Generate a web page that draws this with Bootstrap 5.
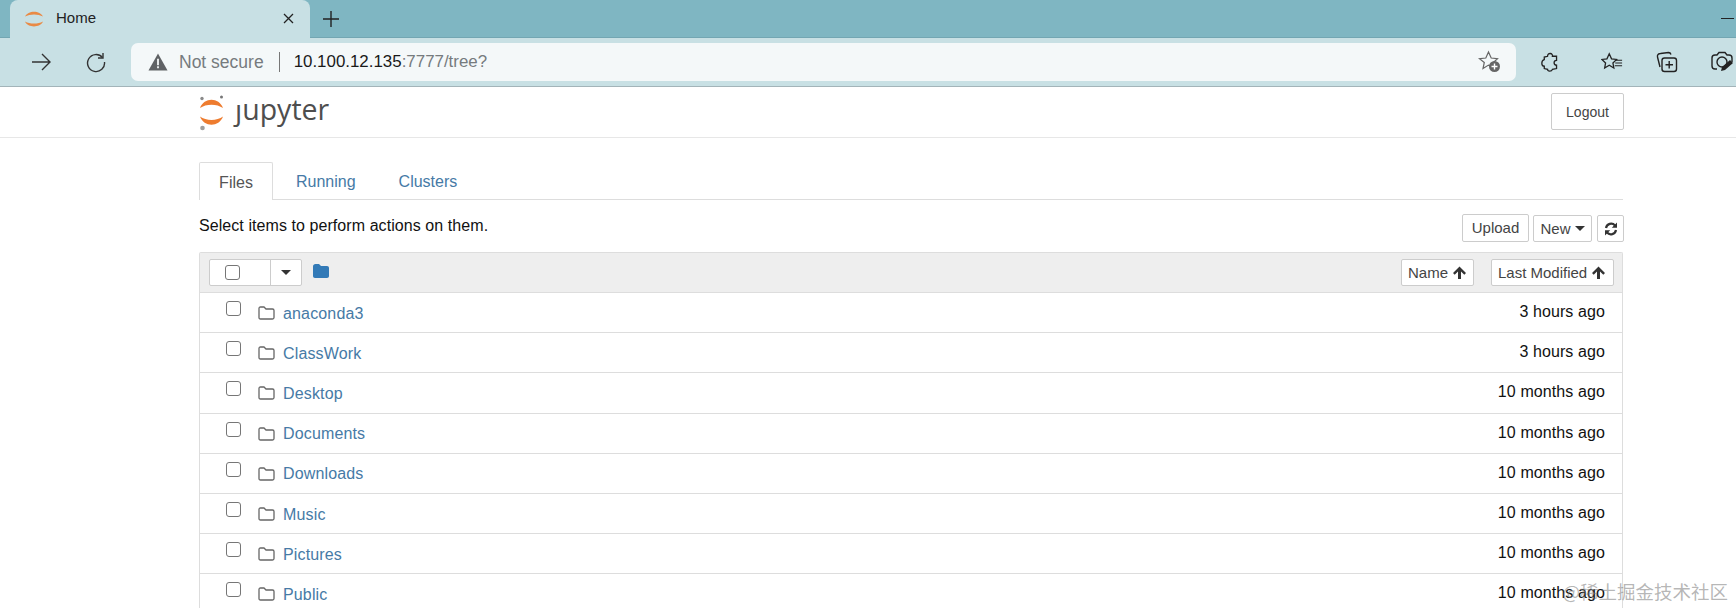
<!DOCTYPE html>
<html lang="en">
<head>
<meta charset="utf-8">
<title>Home</title>
<link href="https://cdn.jsdelivr.net/npm/bootstrap@5.3.0/dist/css/bootstrap.min.css" rel="stylesheet">
<style>
html,body{height:608px;overflow:hidden;background:#fff}
body{font-family:"Liberation Sans",Arial,sans-serif;font-size:16px;color:#111;position:relative}
.tabstrip{height:38px;background:#7fb6c2;padding-left:10px;padding-right:2px;border-bottom:1px solid #73a6b2}
.browser-tab{width:300px;height:38px;background:#c8e0e4;border-radius:8px 8px 0 0;padding:0 15px 0 14px;font-size:15px;color:#222}
.favi{margin-right:12px}
.newtab{margin-left:11px}
.minbtn{margin-left:auto;width:13px;height:1px;background:#222}
.toolbar{height:49px;background:#c8e0e4;border-bottom:1px solid #a3b4b9;padding-top:5px;padding-bottom:5px}
.navicons{width:131px;padding-left:30px;gap:33px}
.addressbar{width:1385px;height:38px;background:#f4f8f9;border-radius:7px;padding:0 14px 0 17px;font-size:17.5px;color:#767b7e}
.notsec{margin-left:11px}
.sep{width:1px;height:20px;background:#777;margin:0 14px 0 15px}
.urltext{font-size:16.9px}
.host{color:#1a1a1a}
.exticons{margin-left:25px}
.ext1{margin-right:42px}
.ext2{margin-right:33px}
.ext3{margin-right:33px}
.jhead{height:51px;border-bottom:1px solid #e7e7e7;padding-left:199px;padding-right:112px}
.jlogo{padding-top:8px;gap:10px}
.jword{font-family:"Open Sans",sans-serif;font-size:28.5px;line-height:30px;color:#4e4e4e;position:relative;margin-top:-1px}
.jword::before{content:"";position:absolute;left:0;top:3px;width:9px;height:8px;background:#fff}
.jbtn{background:#fff;border:1px solid #ccc;color:#444;font-size:14px;line-height:20px;padding:0 7px;border-radius:2px}
.logout{width:73px;height:37px;margin-top:6px;padding:0}
.mainwrap{width:1424px;margin-left:199px;padding-top:24px}
.jtabs{height:38px;border-bottom:1px solid #ddd;font-size:16px}
.jtab{line-height:39px;color:#467aa6;height:37px}
.jtab.on{color:#555;border:1px solid #ddd;border-bottom:0;background:#fff;border-radius:2px 2px 0 0;height:38px;width:74px;padding:0;text-align:center}
.jtab.run{margin-left:23px}
.jtab.clu{margin-left:43px}
.toolrow{height:52px;padding-top:14px}
.seltext{font-size:16px;line-height:24px;color:#111;letter-spacing:.07px}
.upl{width:67px;height:28px;font-size:15px;padding:0}
.newb{width:59px;height:27px;margin-left:4px;font-size:15px;margin-top:1px;padding:0;gap:4px;white-space:nowrap}
.rfr{width:27px;height:27px;margin-left:5px;margin-top:1px;padding:0;margin-right:-1px}
.caretd{display:inline-block;border-top:5px solid #333;border-left:5px solid transparent;border-right:5px solid transparent;vertical-align:middle}
.listbox{border:1px solid #ddd;border-bottom:0;border-radius:2px 2px 0 0}
.listhead{height:40px;background:#eee;border-bottom:1px solid #ddd;padding:6px 8px 6px 9px}
.selgroup{width:93px;height:27px;background:#fff;border:1px solid #ccc;border-radius:2px}
.selleft{width:61px;padding-left:15px;border-right:1px solid #ccc;height:100%}
.selright{width:30px;height:100%;justify-content:center}
.cbx{width:15px;height:15px;border:1.5px solid #767676;border-radius:3px;background:#fff;display:block;flex:none}
.headfolder{margin-left:11px;margin-top:-3px}
.sortb{height:27px;font-size:15px;padding:0 6px;gap:5px;white-space:nowrap}
.sortname{width:73px;margin-right:17px}
.sortmod{width:123px}
.frow{height:40.2px;border-bottom:1px solid #ddd;padding:0 17px 0 26px;font-size:16px}
.frow .cbx{margin-top:-8px}
.ficon{margin-left:17px;margin-right:8px;margin-top:1px}
.flink{color:#467aa6;text-decoration:none;margin-top:2px;letter-spacing:.15px}
.ftime{margin-left:auto;color:#111;margin-top:-1px;letter-spacing:.1px}
.wmark{position:absolute;right:8px;bottom:5px;font-family:"Noto Sans CJK SC",sans-serif;font-size:18.5px;line-height:24px;color:rgba(120,120,120,.55)}
</style>
</head>
<body>
<div class="tabstrip d-flex align-items-center">
  <div class="browser-tab d-flex align-items-center">
    <svg width="20" height="20" viewBox="0 0 20 20" class="favi"><path d="M1 7.500C4 1 16 1 19 7.500 14 4.800 6 4.800 1 7.500Z" fill="#e98a45"/><path d="M1 12.500C4 19 16 19 19 12.500 14 15.200 6 15.200 1 12.500Z" fill="#e98a45"/></svg>
    <span>Home</span>
    <svg width="13" height="13" viewBox="0 0 13 13" class="ms-auto"><path d="M2 2l9 9M11 2l-9 9" stroke="#222" stroke-width="1.3" fill="none"/></svg>
  </div>
  <svg width="20" height="20" viewBox="0 0 20 20" class="newtab"><path d="M10 2v16M2 10h16" stroke="#222" stroke-width="1.4" fill="none"/></svg>
  <div class="minbtn"></div>
</div>
<div class="toolbar d-flex align-items-center">
  <div class="navicons d-flex align-items-center">
    <svg width="22" height="20" viewBox="0 0 22 20"><path d="M2 10h18M12 2l8 8-8 8" stroke="#333" stroke-width="1.4" fill="none"/></svg>
    <svg width="22" height="22" viewBox="0 0 22 22"><path d="M17.500 6.500A8.500 8.500 0 1 0 19.500 11" stroke="#333" stroke-width="1.4" fill="none"/><path d="M18 2v5h-5" stroke="#333" stroke-width="1.4" fill="none"/></svg>
  </div>
  <div class="addressbar d-flex align-items-center">
    <svg width="20" height="18" viewBox="0 0 18 17"><path d="M9 .5L18 16.500H0Z" fill="#5f6265"/><path d="M9 5.500v6M9 12.500v2" stroke="#f4f8f9" stroke-width="1.7"/></svg>
    <span class="notsec">Not secure</span>
    <span class="sep"></span>
    <span class="urltext"><span class="host">10.100.12.135</span>:7777/tree?</span>
    <svg width="24" height="24" viewBox="0 0 24 24" class="ms-auto"><path d="M10.500 2l2.700 6 6.300.7-4.700 4.300 1.300 5-5.600-2.900-5.500 3.400 1.300-6.100L1.500 8.700l6.300-.7Z" fill="none" stroke="#666" stroke-width="1.2"/><circle cx="16.500" cy="16.500" r="5.500" fill="#666"/><path d="M16.500 13.500v6M13.500 16.500h6" stroke="#fff" stroke-width="1.4"/></svg>
  </div>
  <div class="exticons d-flex align-items-center">
    <svg class="ext1" width="18" height="22" viewBox="0 0 22 24"><path d="M8 5c0-5 7-4 6 0h5v5c-4 0-4 6 0 6v4l-5 1c-1 3-6 3-6 0l-4-1v-3c-4 0-4-7 0-8V6Z" fill="none" stroke="#222" stroke-width="1.6"/></svg>
    <svg class="ext2" width="22" height="21" viewBox="0 0 24 22"><path d="M9 1.500l2.500 5.500 5.500.7-4 3.800 1 5.500L9 14l-5 3 1-5.500-4-3.800 5.500-.7Z" fill="none" stroke="#222" stroke-width="1.4"/><path d="M16 8.500h7M15.500 11.500h7.500M15 14.500h8" stroke="#222" stroke-width="1.1"/></svg>
    <svg class="ext3" width="22" height="22" viewBox="0 0 22 22"><path d="M4 16L1.500 6c-.5-2 1-3.500 3-3.500l8-1c1 0 2 .5 2.500 2" fill="none" stroke="#222" stroke-width="1.4"/><rect x="6" y="7" width="14.500" height="13.500" rx="2.500" fill="none" stroke="#222" stroke-width="1.4"/><path d="M13.200 10v7.500M9.500 13.700h7.500" stroke="#222" stroke-width="1.4"/></svg>
    <svg width="22" height="24" viewBox="0 0 22 24"><path d="M6 19H4c-2 0-3-1-3-3V8c0-2 1-3 3-3h2l2-2.500h6L16 5h2c2 0 3 1 3 3v4" fill="none" stroke="#222" stroke-width="1.4"/><circle cx="11" cy="12" r="5" fill="none" stroke="#222" stroke-width="1.4"/><path d="M10 21l1-4 8-7 3 3-8 7Z" fill="#222"/></svg>
  </div>
</div>
<header class="jhead d-flex justify-content-between align-items-start">
  <div class="jlogo d-flex align-items-start">
    <svg width="26" height="36" viewBox="0 0 26 36"><circle cx="3" cy="3.500" r="1.700" fill="#8a8a8a"/><circle cx="22.500" cy="2" r="1.500" fill="#767677"/><circle cx="3.500" cy="33" r="2.300" fill="#9e9e9e"/><path d="M1 13C5 2 20 2 24 13 18 8.500 7 8.500 1 13Z" fill="#ee7c2f"/><path d="M1 21.500C5 32.500 20 32.500 24 21.500 18 26 7 26 1 21.500Z" fill="#ee7c2f"/></svg>
    <span class="jword">jupyter</span>
  </div>
  <button type="button" class="jbtn logout">Logout</button>
</header>
<main class="mainwrap">
  <nav class="jtabs d-flex align-items-start">
    <span class="jtab on">Files</span>
    <span class="jtab run">Running</span>
    <span class="jtab clu">Clusters</span>
  </nav>
  <div class="toolrow d-flex align-items-start">
    <span class="seltext">Select items to perform actions on them.</span>
    <button type="button" class="jbtn upl ms-auto">Upload</button>
    <button type="button" class="jbtn newb d-flex align-items-center justify-content-center">New <span class="caretd"></span></button>
    <button type="button" class="jbtn rfr d-flex align-items-center justify-content-center">
      <svg width="14" height="14" viewBox="0 0 14 14"><path d="M2 6a5.200 5.200 0 0 1 9-2.600M12 8a5.200 5.200 0 0 1-9 2.600" stroke="#333" stroke-width="2.2" fill="none"/><path d="M13 .5v5.200H7.800ZM1 13.500V8.300h5.200Z" fill="#333"/></svg>
    </button>
  </div>
  <section class="listbox">
    <div class="listhead d-flex align-items-center">
      <div class="selgroup d-flex align-items-center">
        <div class="selleft d-flex align-items-center"><span class="cbx"></span></div>
        <div class="selright d-flex align-items-center"><span class="caretd"></span></div>
      </div>
      <svg width="16" height="14" viewBox="0 0 16 14" class="headfolder"><path d="M0 2.500C0 1 1 0 2.500 0H6l2 2h6c1.200 0 2 .8 2 2v8c0 1.200-.8 2-2 2H2c-1.200 0-2-.8-2-2Z" fill="#337ab7"/></svg>
      <button type="button" class="jbtn sortb sortname d-flex align-items-center ms-auto">Name
        <svg width="13" height="13" viewBox="0 0 13 13"><path d="M6.500.5L13 7l-1.700 1.700-3.300-3.300V13H5V5.400L1.700 8.700 0 7Z" fill="#333"/></svg></button>
      <button type="button" class="jbtn sortb sortmod d-flex align-items-center">Last Modified
        <svg width="13" height="13" viewBox="0 0 13 13"><path d="M6.500.5L13 7l-1.700 1.700-3.300-3.300V13H5V5.400L1.700 8.700 0 7Z" fill="#333"/></svg></button>
    </div>
    <div class="frow d-flex align-items-center"><span class="cbx"></span><svg class="ficon" width="17" height="14" viewBox="0 0 17 14"><path d="M1 2.500C1 1.500 1.500 1 2.500 1H6l2 2h6.500c1 0 1.500.5 1.500 1.500v7c0 1-.5 1.500-1.500 1.500h-12C1.500 13 1 12.500 1 11.500Z" fill="none" stroke="#666" stroke-width="1.3"/></svg><a class="flink" href="#">anaconda3</a><span class="ftime">3 hours ago</span></div>
    <div class="frow d-flex align-items-center"><span class="cbx"></span><svg class="ficon" width="17" height="14" viewBox="0 0 17 14"><path d="M1 2.500C1 1.500 1.500 1 2.500 1H6l2 2h6.500c1 0 1.500.5 1.500 1.500v7c0 1-.5 1.500-1.500 1.500h-12C1.500 13 1 12.500 1 11.500Z" fill="none" stroke="#666" stroke-width="1.3"/></svg><a class="flink" href="#">ClassWork</a><span class="ftime">3 hours ago</span></div>
    <div class="frow d-flex align-items-center"><span class="cbx"></span><svg class="ficon" width="17" height="14" viewBox="0 0 17 14"><path d="M1 2.500C1 1.500 1.500 1 2.500 1H6l2 2h6.500c1 0 1.500.5 1.500 1.500v7c0 1-.5 1.500-1.500 1.500h-12C1.500 13 1 12.500 1 11.500Z" fill="none" stroke="#666" stroke-width="1.3"/></svg><a class="flink" href="#">Desktop</a><span class="ftime">10 months ago</span></div>
    <div class="frow d-flex align-items-center"><span class="cbx"></span><svg class="ficon" width="17" height="14" viewBox="0 0 17 14"><path d="M1 2.500C1 1.500 1.500 1 2.500 1H6l2 2h6.500c1 0 1.500.5 1.500 1.500v7c0 1-.5 1.500-1.500 1.500h-12C1.500 13 1 12.500 1 11.500Z" fill="none" stroke="#666" stroke-width="1.3"/></svg><a class="flink" href="#">Documents</a><span class="ftime">10 months ago</span></div>
    <div class="frow d-flex align-items-center"><span class="cbx"></span><svg class="ficon" width="17" height="14" viewBox="0 0 17 14"><path d="M1 2.500C1 1.500 1.500 1 2.500 1H6l2 2h6.500c1 0 1.500.5 1.500 1.500v7c0 1-.5 1.500-1.500 1.500h-12C1.500 13 1 12.500 1 11.500Z" fill="none" stroke="#666" stroke-width="1.3"/></svg><a class="flink" href="#">Downloads</a><span class="ftime">10 months ago</span></div>
    <div class="frow d-flex align-items-center"><span class="cbx"></span><svg class="ficon" width="17" height="14" viewBox="0 0 17 14"><path d="M1 2.500C1 1.500 1.500 1 2.500 1H6l2 2h6.500c1 0 1.500.5 1.500 1.500v7c0 1-.5 1.500-1.500 1.500h-12C1.500 13 1 12.500 1 11.500Z" fill="none" stroke="#666" stroke-width="1.3"/></svg><a class="flink" href="#">Music</a><span class="ftime">10 months ago</span></div>
    <div class="frow d-flex align-items-center"><span class="cbx"></span><svg class="ficon" width="17" height="14" viewBox="0 0 17 14"><path d="M1 2.500C1 1.500 1.500 1 2.500 1H6l2 2h6.500c1 0 1.500.5 1.500 1.500v7c0 1-.5 1.500-1.500 1.500h-12C1.500 13 1 12.500 1 11.500Z" fill="none" stroke="#666" stroke-width="1.3"/></svg><a class="flink" href="#">Pictures</a><span class="ftime">10 months ago</span></div>
    <div class="frow d-flex align-items-center"><span class="cbx"></span><svg class="ficon" width="17" height="14" viewBox="0 0 17 14"><path d="M1 2.500C1 1.500 1.500 1 2.500 1H6l2 2h6.500c1 0 1.500.5 1.500 1.500v7c0 1-.5 1.500-1.500 1.500h-12C1.500 13 1 12.500 1 11.500Z" fill="none" stroke="#666" stroke-width="1.3"/></svg><a class="flink" href="#">Public</a><span class="ftime">10 months ago</span></div>
  </section>
</main>
<div class="wmark">@稀土掘金技术社区</div>
<script src="https://cdn.jsdelivr.net/npm/bootstrap@5.3.0/dist/js/bootstrap.bundle.min.js"></script>
</body>
</html>
